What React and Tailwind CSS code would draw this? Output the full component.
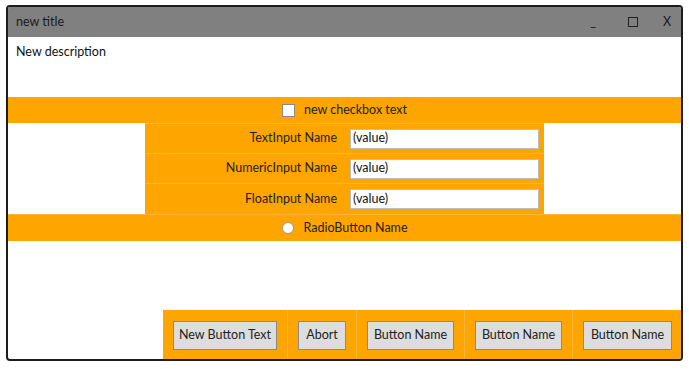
import React from "react";

const font = { fontFamily: 'Lato, "Open Sans", sans-serif' };

function FormRow({ label, last }) {
  return (
    <div className={`flex items-center h-[30px] ${last ? "" : "border-b border-[#ffb637]"}`}>
      <div className="w-[192px] text-right text-[12.5px] text-[#222]">{label}</div>
      <div className="ml-[13px] w-[189px] h-[20px] bg-white border border-[#bdbdbd] flex items-center px-[2px] text-[12.5px] text-[#111]">
        (value)
      </div>
    </div>
  );
}

function Btn({ children, w, last }) {
  return (
    <div className={`h-full flex items-center pl-[10px] pt-[1px] ${last ? "pr-[9px]" : "pr-[10px] border-r border-[#ffb637]"}`}>
      <button className={`h-[29px] ${w} bg-[#dddddd] border border-[#8a8a8a] text-[12.5px] text-[#222]`}>
        {children}
      </button>
    </div>
  );
}

export default function App() {
  return (
    <div className="w-[689px] h-[369px] bg-white pt-[5px] pl-[6px]" style={font}>
      <div className="w-[677px] h-[356px] border-2 border-[#1c1c1c] rounded-[4px] overflow-hidden flex flex-col bg-white">
        <div className="h-[30px] bg-[#808080] flex items-center pl-[8px] text-[12.5px] text-[#1a1a1a] shrink-0">
          <span className="flex-1">new title</span>
          <span className="w-[40px] text-center">_</span>
          <span className="w-[40px] flex justify-center">
            <span className="w-[10px] h-[10px] border border-[#222] inline-block" />
          </span>
          <span className="w-[28px] text-center">X</span>
        </div>
        <div className="h-[60px] px-[8px] pt-[6px] text-[12.5px] text-[#111] shrink-0">New description</div>
        <div className="h-[26px] bg-[#ffa500] flex items-center justify-center text-[12.5px] text-[#222] shrink-0">
          <span className="w-[13px] h-[13px] bg-white border border-[#888] mr-[9px]" />
          new checkbox text
        </div>
        <div className="flex justify-center shrink-0">
          <div className="w-[399px] bg-[#ffa500] border-t border-[#ffb637]">
            <FormRow label="TextInput Name" />
            <FormRow label="NumericInput Name" />
            <FormRow label="FloatInput Name" last />
          </div>
        </div>
        <div className="h-[27px] bg-[#ffa500] border-t border-[#ffb637] flex items-center justify-center text-[12.5px] text-[#222] shrink-0">
          <span className="w-[12px] h-[12px] rounded-full bg-white border border-[#999] mr-[10px]" />
          RadioButton Name
        </div>
        <div className="flex-1" />
        <div className="flex justify-end shrink-0">
          <div className="h-[49px] bg-[#ffa500] flex">
            <Btn w="w-[104px]">New Button Text</Btn>
            <Btn w="w-[48px]">Abort</Btn>
            <Btn w="w-[87px]">Button Name</Btn>
            <Btn w="w-[87px]">Button Name</Btn>
            <Btn w="w-[89px]" last>Button Name</Btn>
          </div>
        </div>
      </div>
    </div>
  );
}
